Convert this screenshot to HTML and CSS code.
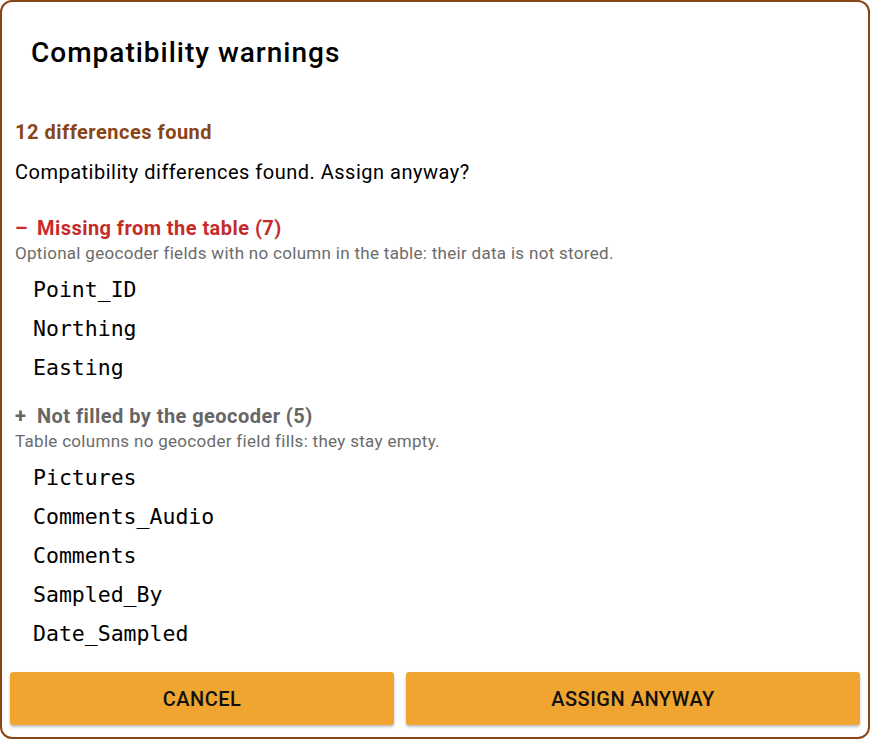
FILE: index.html
```html
<!DOCTYPE html>
<html lang="en">
<head>
<meta charset="utf-8">
<title>Compatibility warnings</title>
<link rel="stylesheet" href="styles.css">
</head>
<body>
<div class="dialog">
  <h1 class="title">Compatibility warnings</h1>
  <div class="content">
    <div class="summary">12 differences found</div>
    <p class="question">Compatibility differences found. Assign anyway?</p>

    <section class="group group-missing">
      <div class="group-head"><span class="sign">–</span>Missing from the table (7)</div>
      <div class="group-note">Optional geocoder fields with no column in the table: their data is not stored.</div>
      <ul class="fields">
        <li>Point_ID</li>
        <li>Northing</li>
        <li>Easting</li>
      </ul>
    </section>

    <section class="group group-unfilled">
      <div class="group-head"><span class="sign">+</span>Not filled by the geocoder (5)</div>
      <div class="group-note">Table columns no geocoder field fills: they stay empty.</div>
      <ul class="fields">
        <li>Pictures</li>
        <li>Comments_Audio</li>
        <li>Comments</li>
        <li>Sampled_By</li>
        <li>Date_Sampled</li>
      </ul>
    </section>
  </div>
  <div class="actions">
    <button class="btn btn-cancel">CANCEL</button>
    <button class="btn btn-assign">ASSIGN ANYWAY</button>
  </div>
</div>
</body>
</html>
```

FILE: styles.css
```css
html, body {
  margin: 0;
  padding: 0;
  background: #ffffff;
}

body {
  font-family: Roboto, "Liberation Sans", sans-serif;
  color: #000;
}

.dialog {
  box-sizing: border-box;
  width: 870px;
  height: 739px;
  border: 2px solid #8a4516;
  border-radius: 12px;
  background: #fff;
  display: flex;
  flex-direction: column;
  overflow: hidden;
}

.title {
  margin: 0;
  padding: 33px 0 0 29px;
  font-size: 28px;
  font-weight: 500;
  letter-spacing: 1px;
  line-height: 36px;
  height: 82px;
  box-sizing: border-box;
}

.content {
  flex: 1;
  padding: 0 0 0 13px;
}

.summary {
  margin-top: 36px;
  font-size: 20px;
  font-weight: 700;
  letter-spacing: 0.5px;
  line-height: 24px;
  color: #8a4516;
}

.question {
  margin: 16px 0 0;
  font-size: 20px;
  letter-spacing: 0.5px;
  line-height: 24px;
}

.group-head {
  font-size: 20px;
  font-weight: 700;
  letter-spacing: 0.45px;
  line-height: 24px;
  display: flex;
  align-items: baseline;
}

.group-missing .group-head {
  margin-top: 32px;
  color: #c62b2b;
}

.group-unfilled .group-head {
  margin-top: 17px;
  color: #666666;
}

.sign {
  width: 22px;
}

.group-note {
  font-size: 17px;
  letter-spacing: 0.3px;
  line-height: 21px;
  color: #6b6b6b;
  margin-top: 3px;
}

.fields {
  list-style: none;
  margin: 6px 0 0;
  padding: 0 0 0 18px;
  font-family: "DejaVu Sans Mono", "Liberation Mono", monospace;
  font-size: 21.5px;
}

.fields li {
  line-height: 39px;
}

.actions {
  display: flex;
  gap: 12px;
  padding: 0 8px 12px;
}

.btn {
  height: 53px;
  border: none;
  border-radius: 3px;
  background: #efa52f;
  color: #111;
  font-family: Roboto, "Liberation Sans", sans-serif;
  font-size: 20px;
  font-weight: 500;
  letter-spacing: 0.5px;
  box-shadow: 0 2px 3px rgba(0, 0, 0, 0.25);
}

.btn-cancel {
  width: 384px;
}

.btn-assign {
  flex: 1;
}
```
